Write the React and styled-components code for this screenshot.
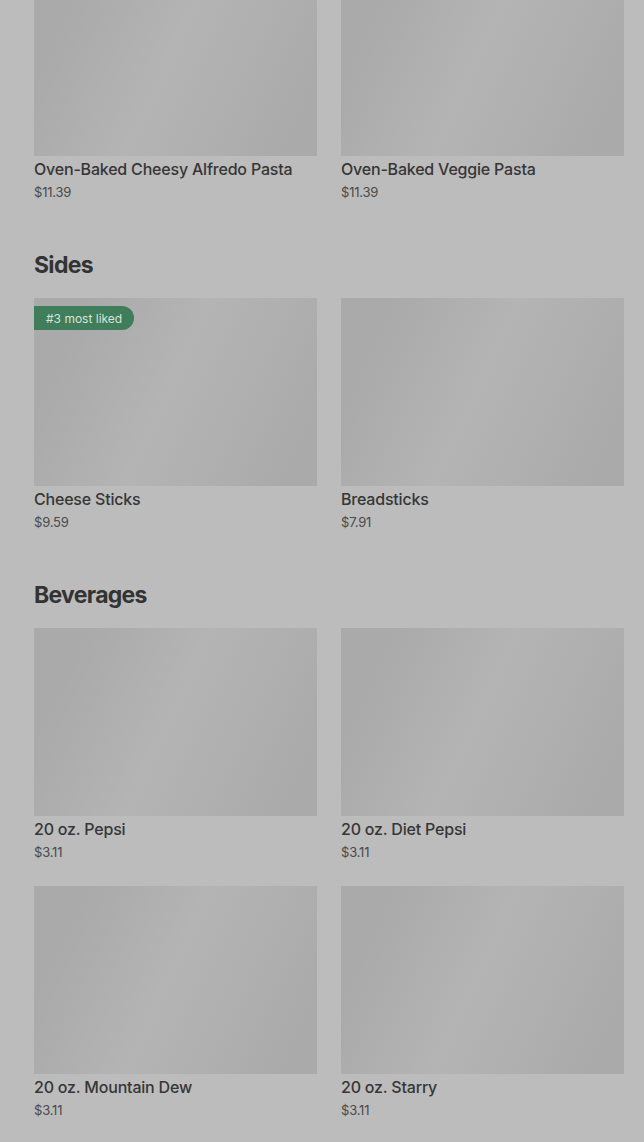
import React from 'react';
import styled, { createGlobalStyle } from 'styled-components';

const GlobalStyle = createGlobalStyle`
    html, body {
        margin:0;
        padding:0;
        background-color:#bcbcbc;
        overflow:hidden;
        font-family:Inter, "Noto Sans", sans-serif;
    }
`;

const Page = styled.div`
    margin-top:-32px;
    padding:0 20px 0 34px;
    box-sizing:border-box;
    width:644px;
`;

const Section = styled.section`
    margin-bottom:47px;
`;

const Heading = styled.h2`
    margin:0 0 17px 0;
    font-size:23px;
    line-height:32px;
    font-weight:700;
    letter-spacing:-0.7px;
    color:#333333;
`;

const Grid = styled.div`
    display:grid;
    grid-template-columns:283px 283px;
    column-gap:24px;
    row-gap:24px;
`;

const Card = styled.div`
    display:flex;
    flex-direction:column;
`;

const Thumb = styled.div`
    position:relative;
    height:188px;
    background:linear-gradient(115deg, #aaaaaa 15%, #b4b4b4 48%, #aeaeae 75%, #aaaaaa 90%);
`;

const Badge = styled.span`
    position:absolute;
    top:8px;
    left:0;
    height:24px;
    padding:0 12px;
    display:flex;
    align-items:center;
    border-radius:0 12px 12px 0;
    background-color:#3f7d5b;
    color:#d8e2dc;
    font-size:12px;
`;

const Title = styled.div`
    margin-top:3px;
    font-size:16px;
    line-height:20px;
    font-weight:500;
    letter-spacing:-0.2px;
    color:#363636;
`;

const Price = styled.div`
    margin-top:3px;
    font-size:13px;
    line-height:20px;
    letter-spacing:-0.2px;
    color:#4a4a4a;
`;

const sections = [
    {name:null, items:[
        {title:"Oven-Baked Cheesy Alfredo Pasta", price:"$11.39"},
        {title:"Oven-Baked Veggie Pasta", price:"$11.39"},
    ]},
    {name:"Sides", items:[
        {title:"Cheese Sticks", price:"$9.59", badge:"#3 most liked"},
        {title:"Breadsticks", price:"$7.91"},
    ]},
    {name:"Beverages", items:[
        {title:"20 oz. Pepsi", price:"$3.11"},
        {title:"20 oz. Diet Pepsi", price:"$3.11"},
        {title:"20 oz. Mountain Dew", price:"$3.11"},
        {title:"20 oz. Starry", price:"$3.11"},
    ]},
];

function App(){
    return(
        <Page>
            <GlobalStyle/>
            {sections.map((s,i)=>(
                <Section key={i}>
                    {s.name&&<Heading>{s.name}</Heading>}
                    <Grid>
                        {s.items.map(el=>(
                            <Card key={el.title}>
                                <Thumb>{el.badge&&<Badge>{el.badge}</Badge>}</Thumb>
                                <Title>{el.title}</Title>
                                <Price>{el.price}</Price>
                            </Card>
                        ))}
                    </Grid>
                </Section>
            ))}
        </Page>
    );
}

export default App;
